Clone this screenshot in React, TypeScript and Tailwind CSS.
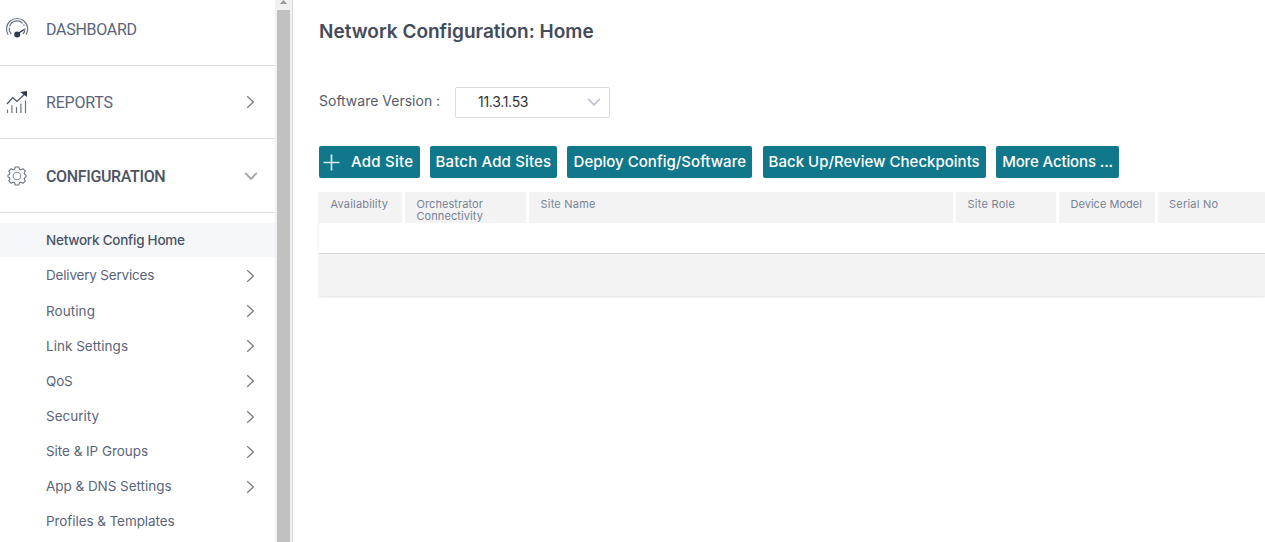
import type { ReactNode } from 'react';

function ChevronRight() {
  return (
    <svg width="9" height="14" viewBox="0 0 9 14" fill="none" stroke="#777b80" strokeWidth="1.3">
      <path d="M1.2 1.2 7.4 7 1.2 12.8" />
    </svg>
  );
}

function ChevronDown({ className }: { className: string }) {
  return (
    <svg width="14" height="10" viewBox="0 0 14 10" fill="none" stroke="currentColor" strokeWidth="1.9" className={className}>
      <path d="M1.2 1.8 7 7.8 12.8 1.8" />
    </svg>
  );
}

function GaugeIcon() {
  return (
    <svg width="24" height="22" viewBox="0 0 24 22" fill="none" stroke="#6b7380" strokeWidth="1.2">
      <path d="M3.1 17.7A10.6 10.6 0 1 1 21.1 17.7" />
      <path d="M6.2 17A8 8 0 0 1 4.3 10.6M4.6 9.2A8 8 0 0 1 17.6 6.2M18.6 7.4A8 8 0 0 1 19.3 8.8" />
      <path d="M12.3 17 18.9 12.6" stroke="#2f3a4a" strokeWidth="1.3" />
      <path d="M20 11.2A8 8 0 0 1 18 17" />
      <circle cx="12.2" cy="17.4" r="3" fill="#2f3a4a" stroke="none" />
    </svg>
  );
}

function ReportsIcon() {
  return (
    <svg width="24" height="24" viewBox="0 0 24 24" fill="none" stroke="#6b7380" strokeWidth="1.2">
      <path d="M2 14 7.7 7.6l4.2 3.8 7.6-7.2" stroke="#4b5563" strokeWidth="1.3" />
      <path d="M15.1 2 22 1v6Z" fill="#2f3a4a" stroke="none" />
      <path d="M2.5 19.5v3.5M6.9 15.2v7.8M11.5 17v6M15.9 13.5V23M20.5 10.5V23" />
    </svg>
  );
}

function GearIcon() {
  return (
    <svg width="20" height="20" viewBox="0 0 20 20" fill="none" stroke="#6b7380" strokeWidth="1.1" strokeLinejoin="round">
      <path d="M8.2 1h3.6l.6 2.2 1.5.6 2-1.1 2.4 2.4-1.1 2 .6 1.5 1.2.4v2l-1.2.4-.6 1.5 1.1 2-2.4 2.4-2-1.1-1.5.6-.6 2.2H8.2l-.6-2.2-1.5-.6-2 1.1-2.4-2.4 1.1-2-.6-1.5L1 11V9l1.2-.4.6-1.5-1.1-2 2.4-2.4 2 1.1 1.5-.6Z" />
      <circle cx="10" cy="10" r="3.8" stroke="#858c97" />
    </svg>
  );
}

function MainItem({ icon, label, labelClass, arrow, rowClass }: { icon: ReactNode; label: string; labelClass: string; arrow?: ReactNode; rowClass: string }) {
  return (
    <div className={`flex shrink-0 items-center border-b border-[#dadcde] pr-[16px] pl-[5px] ${rowClass}`}>
      <span className="flex w-[24px] shrink-0 justify-center">{icon}</span>
      <span className={`ml-[17px] flex-1 font-['Roboto',sans-serif] text-[16px] leading-5 ${labelClass}`}>{label}</span>
      {arrow && <span className="flex w-[16px] justify-center">{arrow}</span>}
    </div>
  );
}

const subItems = [
  { label: 'Delivery Services', cls: 'tracking-[-0.19px]', arrow: true },
  { label: 'Routing', cls: 'tracking-[0.07px]', arrow: true },
  { label: 'Link Settings', cls: 'tracking-[0.02px]', arrow: true },
  { label: 'QoS', cls: 'tracking-[-0.15px]', arrow: true },
  { label: 'Security', cls: '', arrow: true },
  { label: 'Site & IP Groups', cls: 'tracking-[-0.05px]', arrow: true },
  { label: 'App & DNS Settings', cls: 'tracking-[-0.04px]', arrow: true },
  { label: 'Profiles & Templates', cls: 'tracking-[-0.08px]', arrow: false },
];

const actions = [
  { label: 'Batch Add Sites', cls: 'w-[127px] tracking-[0.15px]' },
  { label: 'Deploy Config/Software', cls: 'w-[185px] tracking-[0.02px]' },
  { label: 'Back Up/Review Checkpoints', cls: 'w-[223px] tracking-[0.01px]' },
  { label: 'More Actions ...', cls: 'w-[123px] tracking-[-0.13px]' },
];

const columns = [
  { label: 'Availability', cls: 'w-[83px] tracking-[0.18px]' },
  { label: 'Orchestrator Connectivity', cls: 'w-[121px] tracking-[0.08px]' },
  { label: 'Site Name', cls: 'w-[424px] tracking-[0.22px]' },
  { label: 'Site Role', cls: 'w-[100px] tracking-[0.27px]' },
  { label: 'Device Model', cls: 'w-[95.5px] tracking-[0.03px] whitespace-nowrap' },
  { label: 'Serial No', cls: 'flex-1 tracking-[0.23px]' },
];

export default function App() {
  return (
    <div className="flex h-[542px] w-[1265px] overflow-hidden bg-white font-['Inter',sans-serif]">
      <nav className="flex w-[275px] shrink-0 flex-col">
        <MainItem icon={<GaugeIcon />} label="DASHBOARD" labelClass="tracking-[-0.28px] text-[#59647a] pt-[5px]" rowClass="h-[66px] pb-[10px]" />
        <MainItem icon={<ReportsIcon />} label="REPORTS" labelClass="tracking-[-0.2px] text-[#59647a] pt-[2px]" arrow={<span className="mr-[2px]"><ChevronRight /></span>} rowClass="h-[73px]" />
        <MainItem icon={<GearIcon />} label="CONFIGURATION" labelClass="font-medium tracking-[-0.35px] text-[#4a5363] pt-[2px]" arrow={<ChevronDown className="text-[#a1a4a8]" />} rowClass="h-[74px]" />
        <div className="mt-[10px] flex h-[34px] shrink-0 items-center bg-[#f6f7fa] pl-[46px] text-[13.5px] font-medium tracking-[-0.25px] text-[#4a5363]">
          Network Config Home
        </div>
        {subItems.map((item) => (
          <div key={item.label} className="flex h-[35.15px] shrink-0 items-center pr-[16px] pl-[46px]">
            <span className={`flex-1 pt-[2px] text-[13.5px] text-[#5a6579] ${item.cls}`}>{item.label}</span>
            {item.arrow && (
              <span className="flex w-[16px] justify-center pt-[3px] pr-[2px]">
                <ChevronRight />
              </span>
            )}
          </div>
        ))}
      </nav>

      <div className="flex w-[18px] shrink-0 flex-col items-center border-r border-[#d5d7dc] bg-[#f1f1f1]">
        <svg width="9" height="10" viewBox="0 0 9 10" className="shrink-0">
          <path d="M0.8 4 4.5 0 8.2 4Z" fill="#9a9a9a" />
        </svg>
        <div className="w-[13px] flex-1 bg-[#c1c1c1]" />
      </div>

      <main className="flex min-w-0 flex-1 flex-col pl-[26px]">
        <h1 className="mt-[18px] text-[19px] leading-7 font-semibold tracking-[0px] text-[#444b59]">Network Configuration: Home</h1>
        <div className="mt-[40px] flex h-[32px] items-center">
          <span className="w-[136px] pb-[3px] text-[14px] text-[#555c69]">Software Version :</span>
          <div className="flex h-[31px] w-[155px] items-center justify-between rounded-[2px] border border-[#dcdde0] pr-[8px] pl-[22px]">
            <span className="pb-[2px] text-[14px] tracking-[-0.3px] text-[#333]">11.3.1.53</span>
            <ChevronDown className="text-[#c2c5d2]" />
          </div>
        </div>

        <div className="mt-[28px] flex gap-[10.4px] text-[15px] font-medium text-white">
          <button className="flex h-[32px] w-[100.5px] items-center rounded-[2px] bg-[#11788c] pl-[4px]">
            <svg width="17" height="17" viewBox="0 0 17 17" stroke="#d5e9ed" strokeWidth="1.7">
              <path d="M8.5 0.5v16M0.5 8.5h16" />
            </svg>
            <span className="ml-[11px] tracking-[0.25px] whitespace-nowrap">Add Site</span>
          </button>
          {actions.map((a) => (
            <button key={a.label} className={`h-[32px] rounded-[2px] bg-[#11788c] whitespace-nowrap ${a.cls}`}>
              {a.label}
            </button>
          ))}
        </div>

        <div className="mt-[14px] shadow-[0_1px_2px_rgba(0,0,0,0.12)]">
          <div className="flex h-[31px] gap-[3px]">
            {columns.map((c) => (
              <div key={c.label} className={`bg-[#f3f3f3] px-[11.5px] pt-[5.5px] text-[11px] leading-[12.5px] text-[#778296] ${c.cls}`}>
                {c.label}
              </div>
            ))}
          </div>
          <div className="h-[31px] border-b border-[#d5d9da]" />
          <div className="h-[42px] bg-[#f3f3f3]" />
        </div>
      </main>
    </div>
  );
}
